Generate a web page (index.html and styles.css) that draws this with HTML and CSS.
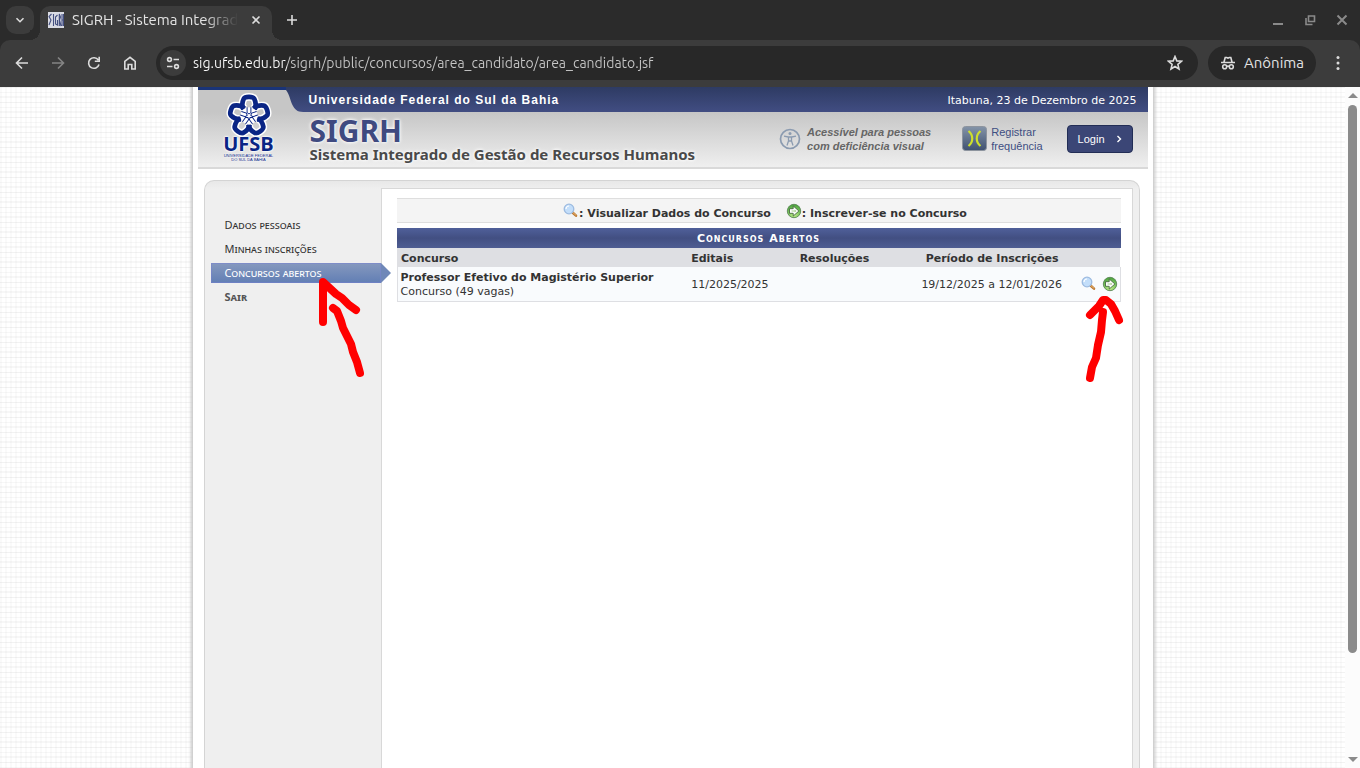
FILE: index.html
```html
<!DOCTYPE html>
<html lang="pt-BR">
<head>
    <meta charset="UTF-8">
    <meta name="viewport" content="width=device-width, initial-scale=1.0">
    <title>SIGRH - Sistema Integrado de Gestão de Recursos Humanos</title>
    <link rel="stylesheet" href="styles.css">
</head>
<body>
    <!-- Icons used more than once -->
    <svg class="symbols" aria-hidden="true">
        <defs>
            <radialGradient id="green" cx="50%" cy="80%" r="80%">
                <stop offset="0" stop-color="#c4f08c"/>
                <stop offset="1" stop-color="#43a038"/>
            </radialGradient>
            <linearGradient id="steel" x1="0" y1="0" x2="0" y2="1">
                <stop offset="0" stop-color="#8494a8"/>
                <stop offset="1" stop-color="#3f5170"/>
            </linearGradient>
            <linearGradient id="navy" x1="0" y1="0" x2="0" y2="1">
                <stop offset="0" stop-color="#2e3b63"/>
                <stop offset="1" stop-color="#414d82"/>
            </linearGradient>
            <symbol id="lens" viewBox="0 0 16 16">
                <path d="M9.5 9.5 13 12.6" stroke="#b9742c" stroke-width="2.6" stroke-linecap="round"/>
                <path d="M9.5 9.2 13 12.3" stroke="#eab876" stroke-width="1" stroke-linecap="round"/>
                <circle cx="6" cy="6" r="4.8" fill="#c3defa" stroke="#9dbbe0" stroke-width="1.3"/>
                <path d="M3 6a3 3 0 0 1 3-3" stroke="#fff" stroke-width="1.2" fill="none"/>
            </symbol>
            <symbol id="go" viewBox="0 0 16 16">
                <circle cx="8" cy="8" r="6.7" fill="url(#green)" stroke="#5b8757" stroke-width=".9"/>
                <path d="M3.5 5.700h3.700V2.900L12.900 8l-5.700 5.100v-2.800H3.500z" fill="#fff" stroke="#46693f" stroke-width=".9"/>
                <path d="M5.500 7.500h3.200V6.500L10.400 8 8.700 9.500v-1H5.500z" fill="#a9cf90"/>
            </symbol>
            <path id="petal" d="M20 17C18 12.500 19.500 8 20.500 6q1-2 5.500-2t5.500 2c1 2 2.500 6.500.5 11"/>
            <path id="ray" d="M24 15v5.500l2 1.500 2-1.500V15"/>
        </defs>
    </svg>

    <!-- Browser bar -->
    <div class="tabs">
        <button class="tab-search" aria-label="Pesquisar guias">
            <svg width="12" height="12" viewBox="0 0 12 12"><path d="M2.5 4.2 6 7.7l3.500-3.500"/></svg>
        </button>
        <div class="tab">
            <svg class="favicon" width="16" height="16" viewBox="0 0 16 16">
                <rect width="16" height="16" fill="#d9dbe4"/>
                <path d="M3.500 2 1 4.500 3 8 1 13M5.500 2v12M9.500 3 7.500 5v7l2 1V8M11.300 14V2l1.200 3-1 3 1.500 6M14 2v12M15.500 2v12M14 8h1.500" stroke="#444f80" stroke-width="1.100" fill="none"/>
            </svg>
            <span class="tab-title">SIGRH - Sistema Integrado</span>
            <button class="tab-close" aria-label="Fechar guia">
                <svg width="10" height="10" viewBox="0 0 10 10"><path d="m1.500 1.500 7 7m0-7-7 7"/></svg>
            </button>
        </div>
        <button class="new-tab" aria-label="Nova guia">
            <svg width="12" height="12" viewBox="0 0 12 12"><path d="M6 1v10M1 6h10"/></svg>
        </button>
        <div class="window-buttons">
            <button aria-label="Minimizar"><svg width="12" height="12" viewBox="0 0 12 12"><path d="M1 10h10" stroke-width="2"/></svg></button>
            <button aria-label="Restaurar"><svg width="12" height="12" viewBox="0 0 12 12"><path d="M4.500 2h6v5.500h-6zM2 4v6.500h6.500"/></svg></button>
            <button aria-label="Fechar"><svg width="12" height="12" viewBox="0 0 12 12"><path d="m1.500 1.500 9 9m0-9-9 9" stroke-width="2"/></svg></button>
        </div>
    </div>
    <div class="toolbar">
        <button aria-label="Voltar"><svg width="16" height="16" viewBox="0 0 16 16"><path d="M14 8H3M8 2.500 2.500 8 8 13.500"/></svg></button>
        <button aria-label="Avançar" class="off"><svg width="16" height="16" viewBox="0 0 16 16"><path d="M2 8h11M8 2.500 13.500 8 8 13.500"/></svg></button>
        <button aria-label="Recarregar"><svg width="16" height="16" viewBox="0 0 16 16"><path d="M13 9.500A5.300 5.300 0 1 1 12.300 5M13.200 1.800v4.400H8.800"/></svg></button>
        <button aria-label="Página inicial"><svg width="16" height="16" viewBox="0 0 16 16"><path d="M2.800 6.300 8 2.300l5.200 4V14H9.800V9.500H6.200V14H2.800z"/></svg></button>
        <div class="address">
            <button class="site-info" aria-label="Informações do site">
                <svg width="16" height="16" viewBox="0 0 16 16"><circle cx="4.500" cy="4.500" r="1.900"/><path d="M8.500 4.500H14M2 11.500h5.500"/><circle cx="11.500" cy="11.500" r="1.900"/></svg>
            </button>
            <input type="text" aria-label="Endereço" value="sig.ufsb.edu.br/sigrh/public/concursos/area_candidato/area_candidato.jsf">
            <button class="star" aria-label="Favoritar">
                <svg width="16" height="16" viewBox="0 0 16 16"><path d="m8 1.500 1.800 4.400 4.700.4-3.600 3.100 1.100 4.600L8 11.500 4 14l1.100-4.600L1.500 6.300l4.700-.4z"/></svg>
            </button>
        </div>
        <button class="profile">
            <svg width="16" height="16" viewBox="0 0 16 16"><path d="M1 7.500h14M4 7l1.200-4.500h1.500L8 3.200l1.300-.7h1.500L12 7"/><circle cx="4.700" cy="11.700" r="2"/><circle cx="11.300" cy="11.700" r="2"/><path d="M6.700 11.200h2.600"/></svg>
            Anônima
        </button>
        <button class="more" aria-label="Menu"><svg width="4" height="16" viewBox="0 0 4 16"><circle cx="2" cy="2.500" r="1.500"/><circle cx="2" cy="8" r="1.500"/><circle cx="2" cy="13.500" r="1.500"/></svg></button>
    </div>

    <div class="window">
        <div class="page">
            <div class="container">
                <header class="header">
                    <div class="logo">
                        <svg width="42" height="40" viewBox="4 1 44 42">
                            <g class="halo">
                                <use href="#petal"/>
                                <use href="#petal" transform="rotate(72 26 24)"/>
                                <use href="#petal" transform="rotate(144 26 24)"/>
                                <use href="#petal" transform="rotate(216 26 24)"/>
                                <use href="#petal" transform="rotate(288 26 24)"/>
                            </g>
                            <g class="petals">
                                <use href="#petal"/>
                                <use href="#petal" transform="rotate(72 26 24)"/>
                                <use href="#petal" transform="rotate(144 26 24)"/>
                                <use href="#petal" transform="rotate(216 26 24)"/>
                                <use href="#petal" transform="rotate(288 26 24)"/>
                            </g>
                            <circle cx="26" cy="24" r="9" fill="#fff"/>
                            <g class="rays">
                                <use href="#ray"/>
                                <use href="#ray" transform="rotate(72 26 24)"/>
                                <use href="#ray" transform="rotate(144 26 24)"/>
                                <use href="#ray" transform="rotate(216 26 24)"/>
                                <use href="#ray" transform="rotate(288 26 24)"/>
                            </g>
                        </svg>
                        <strong>UFSB</strong>
                        <small>UNIVERSIDADE FEDERAL<br>DO SUL DA BAHIA</small>
                    </div>
                    <div class="header-main">
                        <div class="header-top">
                            <svg width="20" height="25" viewBox="0 0 20 25" aria-hidden="true"><path d="M0 3C4 8 4 14 7 19s5 6 13 6V0H0z" fill="url(#navy)"/></svg>
                            <span class="university">Universidade Federal do Sul da Bahia</span>
                            <span class="date">Itabuna, 23 de Dezembro de 2025</span>
                        </div>
                        <div class="header-body">
                            <div class="system">
                                <h1>SIGRH</h1>
                                <p>Sistema Integrado de Gestão de Recursos Humanos</p>
                            </div>
                            <a href="#" class="access">
                                <svg width="22" height="22" viewBox="0 0 22 22" fill="none" stroke="#8b9bb0"><circle cx="11" cy="11" r="9.500" stroke-width="1.700"/><circle cx="11" cy="5.500" r="1.500" fill="#8b9bb0" stroke="none"/><path d="M5 8.200 9.300 9h3.400L17 8.200M9.500 9v4L8 17.500M12.500 9v4l1.500 4.500M9.500 13h3" stroke-width="1.300"/></svg>
                                <span>Acessível para pessoas<br>com deficiência visual</span>
                            </a>
                            <a href="#" class="register">
                                <svg width="25" height="25" viewBox="0 0 25 25"><rect x=".5" y=".5" width="24" height="24" rx="3" fill="url(#steel)" stroke="#8d949e"/><path d="M6.500 5c5 4 5 11 0 15M18.500 5c-5 4-5 11 0 15" fill="none" stroke="#cfe02c" stroke-width="2.200"/></svg>
                                <span>Registrar<br>frequência</span>
                            </a>
                            <a href="#" class="login">Login
                                <svg width="6" height="8" viewBox="0 0 6 8"><path d="m1.500 1 3 3-3 3" fill="none" stroke="#fff" stroke-width="1.400"/></svg>
                            </a>
                        </div>
                    </div>
                </header>

                <div class="panel">
                    <nav class="menu">
                        <ul>
                            <li><a href="#">Dados pessoais</a></li>
                            <li><a href="#">Minhas inscrições</a></li>
                            <li class="active"><a href="#">Concursos abertos</a></li>
                            <li class="exit"><a href="#">Sair</a></li>
                        </ul>
                    </nav>
                    <main class="content">
                        <div class="legend">
                            <span><svg width="16" height="16"><use href="#lens"/></svg>: Visualizar Dados do Concurso</span>
                            <span><svg width="16" height="16"><use href="#go"/></svg>: Inscrever-se no Concurso</span>
                        </div>
                        <table class="list">
                            <caption>Concursos Abertos</caption>
                            <thead>
                                <tr>
                                    <th class="name">Concurso</th>
                                    <th class="notice">Editais</th>
                                    <th class="resolution">Resoluções</th>
                                    <th class="period">Período de Inscrições</th>
                                    <th class="action"></th>
                                    <th class="action"></th>
                                </tr>
                            </thead>
                            <tbody>
                                <tr>
                                    <td><strong>Professor Efetivo do Magistério Superior</strong><br>Concurso (49 vagas)</td>
                                    <td class="notice">11/2025/2025</td>
                                    <td></td>
                                    <td class="period">19/12/2025 a 12/01/2026</td>
                                    <td class="action"><a href="#" aria-label="Visualizar Dados do Concurso"><svg width="16" height="16"><use href="#lens"/></svg></a></td>
                                    <td class="action"><a href="#" aria-label="Inscrever-se no Concurso"><svg width="16" height="16"><use href="#go"/></svg></a></td>
                                </tr>
                            </tbody>
                        </table>
                    </main>
                </div>

                <!-- Red arrows drawn over the menu and the table -->
                <svg class="marks" width="950" height="320" viewBox="198 87 950 320" aria-hidden="true">
                    <path d="M323 322V282l13 12 6 4 7 7 7 5M333 308l4 3 4 10 2 7 5 10 3 6 2 8 4 10 3 11"/>
                    <path d="m1090 315 9-9 4-6h3l5 4 4 7 4 9M1103 312l-1 8-1 12-3 13-2 13-4 9-2 11"/>
                </svg>
            </div>
        </div>
        <div class="scrollbar" aria-hidden="true">
            <svg width="10" height="5" viewBox="0 0 10 5"><path d="M0 5 5 0l5 5z"/></svg>
            <div class="track"><div class="thumb"></div></div>
            <svg width="10" height="5" viewBox="0 0 10 5"><path d="m0 0 5 5 5-5z"/></svg>
        </div>
    </div>
</body>
</html>
```

FILE: styles.css
```css
* {
    margin: 0;
    padding: 0;
    box-sizing: border-box;
}

body {
    display: flex;
    flex-direction: column;
    height: 100vh;
    overflow: hidden;
    background: #2b2b2b;
    color: #333;
    font-family: "DejaVu Sans", Verdana, sans-serif;
    font-size: 11px;
    line-height: 14px;
}

a {
    color: inherit;
    text-decoration: none;
}

button {
    border: none;
    background: none;
    color: inherit;
    cursor: pointer;
}

svg {
    display: block;
    flex: none;
}

.symbols {
    position: absolute;
    width: 0;
    height: 0;
}

/* Browser bar */
.tabs,
.toolbar {
    display: flex;
    align-items: center;
    flex: none;
    color: #e3e3e3;
    font-family: Ubuntu, "Noto Sans", sans-serif;
    font-size: 15px;
    line-height: 20px;
}

.tabs button,
.toolbar button {
    display: flex;
    align-items: center;
    justify-content: center;
}

.tabs button svg,
.toolbar button svg {
    fill: none;
    stroke: #dcdcdc;
    stroke-width: 1.6px;
}

.tabs {
    height: 40px;
    padding: 0 6px;
}

.tabs .tab-search {
    width: 28px;
    height: 28px;
    border-radius: 10px;
    background: #3c3c3c;
}

.tab {
    position: relative;
    display: flex;
    align-items: center;
    gap: 8px;
    width: 232px;
    height: 34px;
    margin: 6px 6px 0;
    padding: 0 8px 6px;
    border-radius: 10px 10px 0 0;
    background: #3c3c3c;
}

.tab::before,
.tab::after {
    content: '';
    position: absolute;
    bottom: 0;
    width: 10px;
    height: 10px;
}

.tab::before {
    right: 100%;
    background: radial-gradient(circle at 0 0, #2b2b2b 10px, #3c3c3c 10px);
}

.tab::after {
    left: 100%;
    background: radial-gradient(circle at 100% 0, #2b2b2b 10px, #3c3c3c 10px);
}

.tab-title {
    flex: 1;
    overflow: hidden;
    white-space: nowrap;
    -webkit-mask-image: linear-gradient(to right, #000 80%, transparent);
    mask-image: linear-gradient(to right, #000 80%, transparent);
}

.tabs .tab-close {
    width: 16px;
    height: 16px;
    margin-left: 2px;
}

.tabs .new-tab {
    width: 28px;
    height: 28px;
}

.window-buttons {
    display: flex;
    gap: 20px;
    margin-left: auto;
    padding-right: 6px;
}

.tabs .window-buttons svg {
    stroke: #8a8a8a;
}

.toolbar {
    gap: 8px;
    height: 47px;
    padding: 0 8px 1px;
    border-radius: 10px 10px 0 0;
    background: #3c3c3c;
}

.toolbar > button {
    width: 28px;
    height: 28px;
}

.toolbar .off {
    opacity: .45;
}

.address {
    display: flex;
    flex: 1;
    align-items: center;
    height: 34px;
    margin: 0 2px 0 4px;
    padding: 0 4px;
    border-radius: 17px;
    background: #282828;
}

.address .site-info {
    width: 26px;
    height: 26px;
    border-radius: 50%;
    background: #3c3c3c;
}

.address input {
    flex: 1;
    height: 26px;
    margin-left: 7px;
    border: none;
    outline: none;
    /* host in white, path in grey */
    background: linear-gradient(to right, #fff 94px, #c7c7c7 94px);
    -webkit-background-clip: text;
    background-clip: text;
    color: transparent;
    font: inherit;
    font-size: 14px;
}

.address .star {
    width: 38px;
    height: 26px;
}

.toolbar .profile {
    gap: 8px;
    width: auto;
    height: 34px;
    padding: 0 12px;
    border-radius: 17px;
    background: #282828;
    font: inherit;
}

.toolbar .more svg {
    fill: #dcdcdc;
    stroke: none;
}

/* Window */
.window {
    display: flex;
    flex: 1;
    min-height: 0;
}

.page {
    display: flex;
    flex: 1;
    overflow: hidden;
    background:
        repeating-linear-gradient(to bottom, rgba(0, 0, 0, .05) 0 1px, transparent 1px 5px, rgba(0, 0, 0, .03) 5px 6px, transparent 6px 9px, rgba(0, 0, 0, .03) 9px 11px, transparent 11px 15px),
        repeating-linear-gradient(to right, rgba(0, 0, 0, .02) 0 2px, transparent 2px 5px),
        #fff;
}

.container {
    position: relative;
    display: flex;
    flex-direction: column;
    flex: 1;
    max-width: 960px;
    margin: 0 auto;
    padding: 0 5px;
    background: #fff;
    box-shadow: 0 0 3px 2px #c8c8c8;
}

.scrollbar {
    display: flex;
    flex-direction: column;
    align-items: center;
    gap: 7px;
    width: 15px;
    padding: 6px 0;
    background: #fcfcfc;
    fill: #8b8b8b;
}

.track {
    flex: 1;
}

.thumb {
    width: 9px;
    height: 85%;
    border-radius: 5px;
    background: #8b8b8b;
}

/* Header */
.header {
    display: flex;
    height: 82px;
    border-bottom: 2px solid #d9d9d9;
    background: linear-gradient(#c6c6c6 25px, #efefef);
}

.logo {
    display: flex;
    flex-direction: column;
    align-items: center;
    width: 88px;
    padding: 4px 0 0 14px;
    border-top: 3px solid #1a3478;
    color: #0a2585;
    font-family: "Liberation Sans", Arial, sans-serif;
    text-align: center;
    text-shadow: 0 0 2px #fff, 0 0 2px #fff, 0 0 3px #fff;
}

.logo svg {
    overflow: visible;
    fill: none;
}

.logo .halo {
    stroke: #fff;
    stroke-width: 8px;
}

.logo .petals {
    stroke: #0a2585;
    stroke-width: 5px;
}

.logo .rays {
    stroke: #0a2585;
    stroke-width: 1px;
}

.logo strong {
    font-family: "Open Sans", sans-serif;
    font-size: 20px;
    line-height: 20px;
}

.logo small {
    font-size: 4px;
    line-height: 4px;
}

.header-main {
    display: flex;
    flex-direction: column;
    flex: 1;
}

.header-top {
    display: flex;
    align-items: center;
    height: 25px;
    padding-right: 11px;
    background: linear-gradient(#2e3b63, #414d82) 20px 0 no-repeat;
    color: #fff;
}

.university {
    margin-left: 3px;
    font-family: "Liberation Sans", Arial, sans-serif;
    font-size: 12px;
    font-weight: bold;
    letter-spacing: 1px;
}

.date {
    margin-left: auto;
    padding-top: 2px;
}

.header-body {
    display: flex;
    flex: 1;
    align-items: center;
    padding: 0 15px 2px 24px;
    font-family: "Liberation Sans", Arial, sans-serif;
}

.system {
    font-family: "Noto Sans", sans-serif;
    text-shadow: 0 0 3px #fff, 0 0 4px #fff;
}

.system h1 {
    color: #3f4a80;
    font-size: 30px;
    line-height: 30px;
}

.system p {
    color: #4a4a4a;
    font-size: 15px;
    font-weight: bold;
    line-height: 16px;
}

.access,
.register {
    display: flex;
    align-items: center;
}

.access {
    gap: 6px;
    margin-left: auto;
    color: #666;
    font-style: italic;
    font-weight: bold;
}

.register {
    gap: 4px;
    margin-left: 31px;
    color: #404e82;
}

.login {
    display: flex;
    align-items: center;
    gap: 11px;
    height: 28px;
    margin-left: 24px;
    padding: 0 10px;
    border: 1px solid #222d55;
    border-radius: 4px;
    background: #3b4676;
    color: #fff;
}

/* Panel */
.panel {
    display: flex;
    flex: 1;
    margin: 11px 8px 0 6px;
    padding: 7px 6px 0;
    border: 1px solid #d4d4d4;
    border-bottom: none;
    border-radius: 10px 10px 0 0;
    background: linear-gradient(#e8e8e8, #efefef 8px);
}

.menu {
    width: 170px;
    padding-top: 27px;
    font-family: "Noto Sans", Tahoma, sans-serif;
    font-variant: small-caps;
}

.menu ul {
    list-style: none;
}

.menu li {
    position: relative;
    margin-bottom: 4px;
    padding-left: 14px;
    line-height: 20px;
}

.menu .active {
    background: linear-gradient(#8699be, #617eb4);
    box-shadow: inset 0 0 0 1px rgba(120, 130, 210, .5);
    color: #fff;
}

.menu .active::after {
    content: '';
    position: absolute;
    top: 0;
    left: 100%;
    border: 10px solid transparent;
    border-left-color: #6f87b8;
    border-right: none;
}

.menu .exit {
    color: #555;
    font-weight: bold;
}

.content {
    flex: 1;
    padding: 9px 11px 0 15px;
    border: 1px solid #d8d8d8;
    border-bottom: none;
    background: #fff;
}

.legend {
    display: flex;
    justify-content: center;
    gap: 15px;
    height: 25px;
    margin-bottom: 5px;
    padding-left: 13px;
    border: 1px solid #dedede;
    border-width: 1px 0;
    background: #f4f4f4;
    font-weight: bold;
}

.legend span {
    display: flex;
    align-items: center;
    padding-top: 6px;
}

.legend svg {
    margin-top: -6px;
}

.list {
    width: 100%;
    border-collapse: collapse;
    table-layout: fixed;
}

.list caption {
    padding-top: 2px;
    background: linear-gradient(#50609a, #424f82 50%, #4e5d92);
    color: #fff;
    font-variant: small-caps;
    font-weight: bold;
    letter-spacing: 1px;
    line-height: 18px;
}

.list thead {
    background: #dedfe3;
}

.list th {
    padding: 3px 4px 1px;
    line-height: 15px;
    text-align: left;
}

.list tbody {
    border: 1px solid #dedfe3;
    border-top: none;
    background: #f9fbfd;
}

.list td {
    padding: 4px 3px 2px;
}

.list .name {
    width: 40%;
}

.list .notice {
    width: 15%;
    padding-left: 5px;
}

.list .resolution {
    width: 16%;
    padding-left: 5px;
}

.list .period {
    padding-right: 8px;
    text-align: center;
}

.list .action {
    width: 21px;
    padding: 3px 2px 3px 3px;
}

/* Arrows over the page */
.marks {
    position: absolute;
    top: 0;
    left: 5px;
    fill: none;
    stroke: #f00;
    stroke-width: 8px;
    stroke-linecap: round;
    stroke-linejoin: round;
    pointer-events: none;
}
```
